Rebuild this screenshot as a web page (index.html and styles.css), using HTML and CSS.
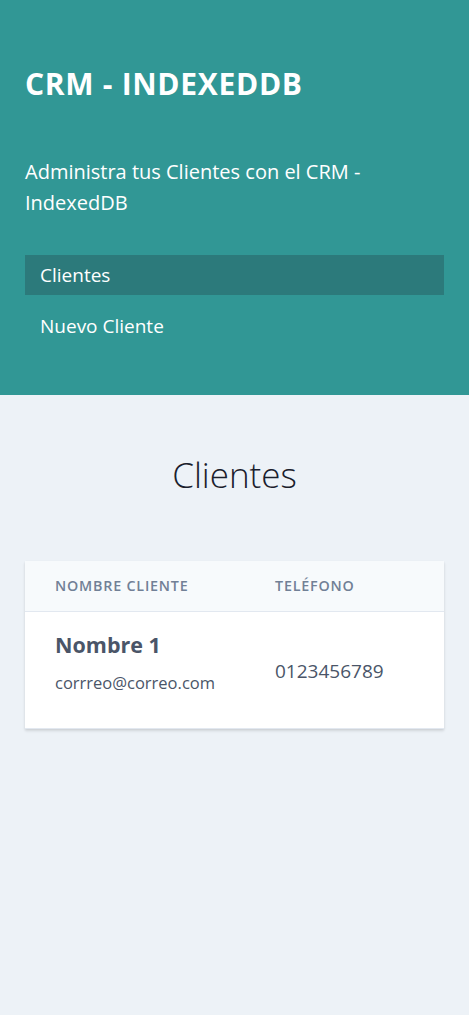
FILE: index.html
```html
<!DOCTYPE html>
<html lang="es">
<head>
<meta charset="utf-8">
<title>CRM - IndexedDB</title>
<link rel="stylesheet" href="styles.css">
</head>
<body>
<div class="page">
  <aside class="sidebar">
    <h1 class="brand">CRM - IndexedDB</h1>
    <p class="tagline">Administra tus Clientes con el CRM - IndexedDB</p>
    <nav class="nav">
      <a class="nav-link active" href="#">Clientes</a>
      <a class="nav-link" href="#">Nuevo Cliente</a>
    </nav>
  </aside>
  <main class="content">
    <h2 class="title">Clientes</h2>
    <div class="card">
      <table class="table">
        <thead>
          <tr>
            <th class="th">Nombre Cliente</th>
            <th class="th">Teléfono</th>
          </tr>
        </thead>
        <tbody>
          <tr>
            <td class="td">
              <p class="name">Nombre 1</p>
              <p class="email">corrreo@correo.com</p>
            </td>
            <td class="td"><p class="phone">0123456789</p></td>
          </tr>
        </tbody>
      </table>
    </div>
  </main>
</div>
</body>
</html>
```
FILE: styles.css
```css
* { box-sizing: border-box; }
html, body { margin: 0; padding: 0; }
body {
  font-family: "Open Sans", "Noto Sans", sans-serif;
  background: #edf2f7;
  min-height: 1015px;
}
.sidebar {
  background: #319795;
  padding: 62px 25px 49px;
  color: #fff;
}
.brand {
  margin: 0;
  font-size: 30px;
  line-height: 44px;
  font-weight: 700;
  text-transform: uppercase;
  letter-spacing: 0.7px;
}
.tagline {
  margin: 50px 0 0;
  font-size: 20px;
  line-height: 31px;
}
.nav {
  margin-top: 37px;
  display: flex;
  flex-direction: column;
  gap: 11px;
}
.nav-link {
  display: block;
  padding: 0 15px;
  height: 40px;
  line-height: 40px;
  font-size: 19px;
  color: #fff;
  text-decoration: none;
}
.nav-link.active { background: #2c7a7b; }
.content { padding: 50px 25px 40px; }
.title {
  margin: 0;
  text-align: center;
  font-size: 35px;
  line-height: 60px;
  font-weight: 300;
  color: #1a202c;
}
.card {
  margin-top: 56px;
  background: #fff;
  box-shadow: 0 2px 3px rgba(0,0,0,0.1), 0 1px 2px rgba(0,0,0,0.06);
}
.table { width: 100%; border-collapse: collapse; }
.th {
  text-align: left;
  background: #f7fafc;
  border-bottom: 1px solid #e2e8f0;
  padding: 0 30px;
  height: 50px;
  font-size: 14.3px;
  font-weight: 600;
  color: #718096;
  text-transform: uppercase;
  letter-spacing: 0.8px;
}
.th:first-child { width: 250px; }
.th + .th { padding-left: 0; }
.td {
  padding: 18px 30px 33px;
  border-bottom: 1px solid #e2e8f0;
  vertical-align: middle;
}
.td + .td { padding: 27px 30px 24px 0; }
.name {
  margin: 0;
  font-size: 21.5px;
  line-height: 30px;
  font-weight: 700;
  color: #4a5568;
}
.email {
  margin: 11px 0 0;
  font-size: 16.5px;
  line-height: 24px;
  color: #4a5568;
}
.phone {
  margin: 0;
  font-size: 19px;
  line-height: 28px;
  color: #4a5568;
}
```
